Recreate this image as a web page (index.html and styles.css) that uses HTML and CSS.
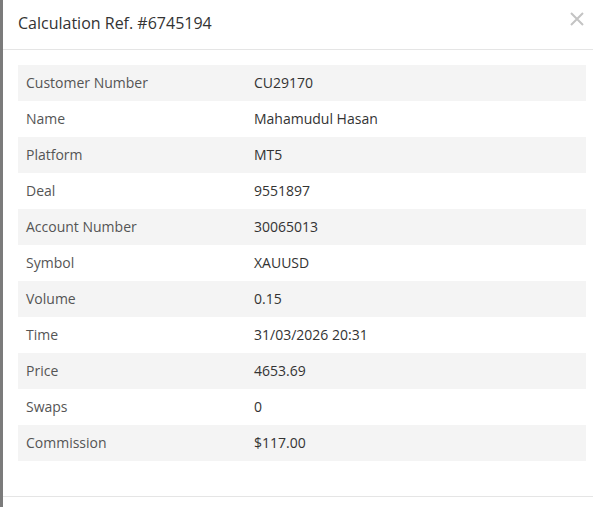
FILE: index.html
```html
<!DOCTYPE html>
<html>
<head>
<meta charset="utf-8">
<link rel="stylesheet" href="styles.css">
</head>
<body>
<div class="modal">
  <div class="modal-header">
    <h4 class="modal-title">Calculation Ref. #6745194</h4>
    <button class="close" aria-label="Close">
      <svg width="14" height="14" viewBox="0 0 14 14"><path d="M1 1 L13 13 M13 1 L1 13" stroke="#c4c4c4" stroke-width="2" fill="none"/></svg>
    </button>
  </div>
  <div class="modal-body">
    <table class="details">
      <tbody>
        <tr><td class="label">Customer Number</td><td class="value">CU29170</td></tr>
        <tr><td class="label">Name</td><td class="value">Mahamudul Hasan</td></tr>
        <tr><td class="label">Platform</td><td class="value">MT5</td></tr>
        <tr><td class="label">Deal</td><td class="value">9551897</td></tr>
        <tr><td class="label">Account Number</td><td class="value">30065013</td></tr>
        <tr><td class="label">Symbol</td><td class="value">XAUUSD</td></tr>
        <tr><td class="label">Volume</td><td class="value">0.15</td></tr>
        <tr><td class="label">Time</td><td class="value">31/03/2026 20:31</td></tr>
        <tr><td class="label">Price</td><td class="value">4653.69</td></tr>
        <tr><td class="label">Swaps</td><td class="value">0</td></tr>
        <tr><td class="label">Commission</td><td class="value">$117.00</td></tr>
      </tbody>
    </table>
  </div>
  <div class="modal-footer"></div>
</div>
</body>
</html>
```
FILE: styles.css
```css
html, body {
  margin: 0;
  padding: 0;
  height: 100%;
  overflow: hidden;
}
body {
  background: #7b7b7b;
  font-family: "Open Sans", "Noto Sans", sans-serif;
  color: #333;
}
.modal {
  margin-left: 3px;
  width: 598px;
  height: 100%;
  background: #fff;
}
.modal-header {
  position: relative;
  box-sizing: border-box;
  height: 50px;
  padding: 13px 15px 0 15px;
  border-bottom: 1px solid #e5e5e5;
}
.modal-title {
  margin: 0;
  font-size: 16px;
  font-weight: 400;
  color: #333;
  line-height: 20px;
}
.close {
  position: absolute;
  left: 567px;
  top: 12px;
  border: 0;
  background: none;
  padding: 0;
  margin: 0;
  width: 14px;
  height: 14px;
  cursor: pointer;
}
.close svg { display: block; }
.modal-body {
  padding: 15px 15px 35px 15px;
}
.details {
  width: 568px;
  border-collapse: collapse;
  font-size: 14px;
}
.details td {
  height: 36px;
  padding: 0 8px;
  vertical-align: middle;
  line-height: 20px;
}
.details tr:nth-child(odd) td {
  background: #f4f4f4;
}
.details .label {
  width: 212px;
  color: #555;
}
.details .value {
  color: #333;
}
.modal-footer {
  border-top: 1px solid #e5e5e5;
  height: 20px;
}
```
